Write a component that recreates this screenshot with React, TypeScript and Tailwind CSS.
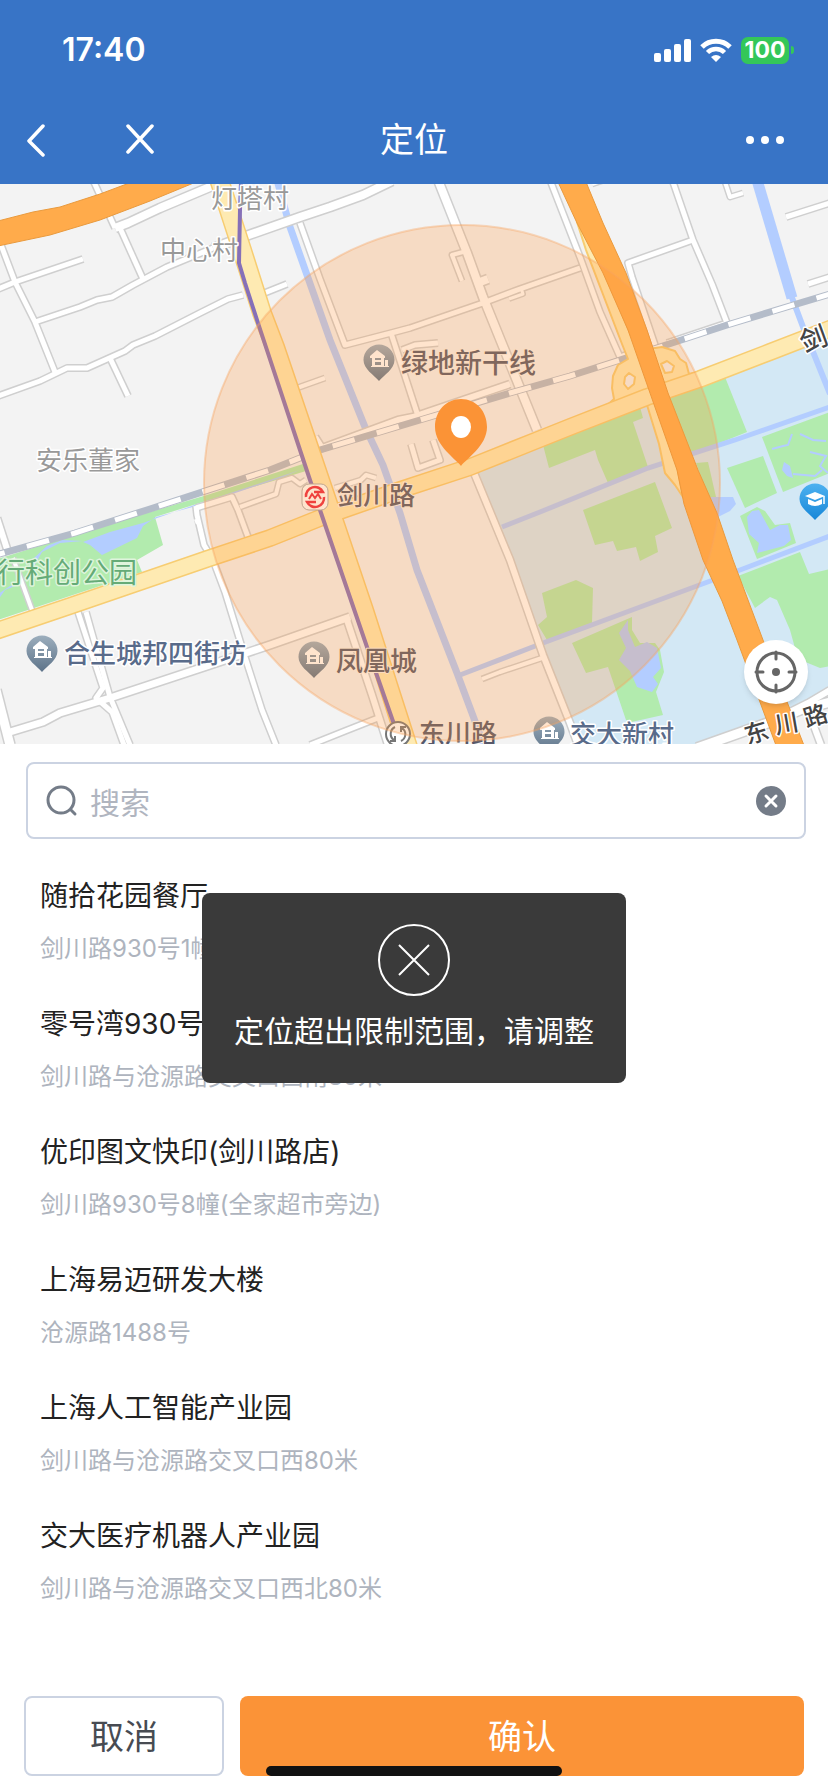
import React, { useState } from "react";

const FONT = "font-['Inter','Noto_Sans_CJK_SC',sans-serif]";

const places = [
  { name: "随拾花园餐厅", address: "剑川路930号1幢" },
  { name: "零号湾930号", address: "剑川路与沧源路交叉口西南80米" },
  { name: "优印图文快印(剑川路店)", address: "剑川路930号8幢(全家超市旁边)" },
  { name: "上海易迈研发大楼", address: "沧源路1488号" },
  { name: "上海人工智能产业园", address: "剑川路与沧源路交叉口西80米" },
  { name: "交大医疗机器人产业园", address: "剑川路与沧源路交叉口西北80米" },
];

// Side streets, w = width of the white fill
const streets = [
  { d: "M-2 237 L15 282 L35 322 L55 372", w: 5 },
  { d: "M-2 289 L15 282 L83 259", w: 5 },
  { d: "M35 322 L80 307 L97 300 L112 297 L133 285 L167 267 L213 248", w: 5 },
  { d: "M213 248 L243 237 L300 217 L330 207 L363 195 L392 181", w: 8 },
  { d: "M-2 396 L40 381 L67 368 L87 368 L125 351 L133 345 L155 336 L200 313 L228 299 L243 295", w: 5 },
  { d: "M262 294 L287 284", w: 5 },
  { d: "M110 358 L128 396", w: 5 },
  { d: "M115 228 L128 223 L160 208 L217 184", w: 8 },
  { d: "M93 180 L115 228", w: 5 },
  { d: "M120 228 L143 279", w: 5 },
  { d: "M300 223 L320 279 L345 345 L395 332 L410 328 L483 303 L520 289 L580 268", w: 5 },
  { d: "M438 180 L467 253 L483 297 L537 430", w: 8 },
  { d: "M391 333 L417 413", w: 5 },
  { d: "M315 437 L322 448 L398 420 L413 417 L510 384", w: 6 },
  { d: "M297 388 L325 378", w: 4 },
  { d: "M463 252 L452 255 L462 281", w: 4 },
  { d: "M480 282 L488 279", w: 8 },
  { d: "M509 299 L523 294 L521 288", w: 3 },
  { d: "M402 350 L415 345 L438 343", w: 5 },
  { d: "M411 444 L418 468 L440 460 L433 440", w: 5 },
  { d: "M550 180 L580 257 L600 312 L620 357 L628 354", w: 5 },
  { d: "M673 182 L693 240 L712 284 L727 323 L667 343", w: 5 },
  { d: "M693 240 L628 263 L632 277 L656 348", w: 5 },
  { d: "M725 182 L730 197 L743 193", w: 4 },
  { d: "M786 217 L830 203", w: 5 },
  { d: "M808 284 L830 277", w: 5 },
  { d: "M592 184 L604 180", w: 4 },
  { d: "M78 612 L103 688 L96 698 L112 712 L124 745", w: 5 },
  { d: "M86 612 L110 697 L130 745", w: 5 },
  { d: "M10 732 L43 722 L60 713 L80 707 L110 698 L207 666 L270 645 L350 617", w: 7 },
  { d: "M-4 690 L10 745", w: 9 },
  { d: "M195 522 L200 520 M196 506 L197 515 L204 545 L213 560 L225 592 L245 657 L262 710 L276 745", w: 5 },
  { d: "M196 508 L232 497 L238 510 L248 537", w: 5 },
  { d: "M240 507 L276 494 L279 482 L292 478 L300 484 L306 480", w: 4 },
  { d: "M-3 518 L8 552", w: 6 },
  { d: "M13 558 L32 610", w: 4 },
  { d: "M347 620 L372 695 L388 745", w: 6 },
  { d: "M378 718 L345 731 L310 745", w: 5 },
  { d: "M335 488 L361 480 L366 475 L376 478", w: 4 },
  { d: "M472 468 L510 560 L543 655 L570 723 L578 745", w: 6 },
  { d: "M482 679 L500 672 L542 658", w: 4 },
  { d: "M697 748 L773 721 L800 710 L830 702", w: 9 },
  { d: "M790 712 L808 703 L830 690", w: 6 },
  { d: "M808 710 L821 745", w: 6 },
];

const MAIN_ROAD = "M-4 631 L70 606 L207 559 L270 538 L320 518 L400 490 L470 467 L540 439 L570 427 L647 397 L700 379 L770 352 L832 328";
const JIANCHUAN_NS = "M216 170 L242 250 L262 313 L275 347 L315 465 L336 527 L364 610 L409 750";
const RAILWAY = "M-4 555 L75 533 L150 509 L270 470 L320 450 L430 417 L510 393 L570 376 L620 360 L727 325 L830 294";
const RAMPS =
  "M577 222 L590 236 L612 290 L632 338 L643 352 L648 349 L662 347 L675 351 L680 359 L686 363 L689 374 L700 372 L700 384 L660 398 L672 440 L683 497 L675 485 L665 473 L659 444 L647 405 L600 412 L614 399 L612 388 L613 376 L618 365 L628 359 L622 344 L586 250 Z";

const PoiPin = ({ x, y, fill = "url(#poi)", school = false }: { x: number; y: number; fill?: string; school?: boolean }) => (
  <g transform={`translate(${x} ${y})`}>
    <path d="M0 21 C-5 15 -15.5 9 -15.5 0 A15.5 15.5 0 1 1 15.5 0 C15.5 9 5 15 0 21 Z" fill={fill} />
    {school ? (
      <>
        <path d="M-10 -3 L0 -7 L10 -3 L0 1 Z" fill="#fff" />
        <path d="M-7 0 L0 3 L7 0 V5 Q0 9 -7 5 Z" fill="#fff" />
        <path d="M9 -3 V5" stroke="#fff" strokeWidth="1.5" />
      </>
    ) : (
      <path d="M-9 -4 L-2 -10 L6 -4 V-2 H5 V6 H6 V0 H9 V6 H10 V7 H-8 V6 H-7 V-2 H-9 Z M-4 -2 V0 H2 V-2 Z M-4 2 V5 H2 V2 Z" fill="#fff" fillRule="evenodd" />
    )}
  </g>
);

const MapView = () => (
  <svg
    viewBox="0 184 828 560"
    preserveAspectRatio="xMidYMid slice"
    className="block h-[560px] w-full bg-[#f3f3f3] font-['Noto_Sans_CJK_SC',sans-serif]"
    role="img"
    aria-label="地图"
  >
    <defs>
      <linearGradient id="poi" x1="0" y1="0" x2="0" y2="1">
        <stop offset="0" stopColor="#9caebd" />
        <stop offset="1" stopColor="#5d7389" />
      </linearGradient>
      <linearGradient id="edu" x1="0" y1="0" x2="0" y2="1">
        <stop offset="0" stopColor="#4db1f0" />
        <stop offset="1" stopColor="#1787d8" />
      </linearGradient>
    </defs>

    {/* Campus ground */}
    <path d="M472 470 L830 334 V690 L793 708 L700 745 H578 Z" fill="#d3e8f5" />

    {/* Parks */}
    <g fill="#b2ebae">
      <path d="M-2 559 L113 523 L207 495 L306 463 L306 471 L203 502 L155 517 L163 545 L137 560 L142 572 L-2 620 Z" />
      <path d="M543 445 L640 407 L643 418 L633 422 L648 467 L608 483 L598 460 L595 450 L549 468 Z" />
      <path d="M664 399 L725 377 L747 432 L690 455 Z" />
      <path d="M762 437 L830 412 V473 L783 492 Z" />
      <path d="M727 468 L763 456 L777 493 L745 508 Z" />
      <path d="M740 516 L757 507 L765 511 L775 525 L790 523 L796 543 L757 559 Z" />
      <path d="M738 576 L800 552 L809 574 L830 569 V666 L820 668 L798 659 L790 630 L777 600 L770 597 L755 608 Z" />
      <path d="M583 510 L655 482 L672 528 L655 536 L658 552 L640 561 L636 547 L617 551 L613 541 L595 545 Z" />
      <path d="M542 593 L576 580 L593 588 L592 623 L547 640 L538 625 L547 617 Z" />
      <path d="M572 643 L632 617 L632 630 L640 643 L655 643 L660 650 L664 672 L656 692 L663 715 L627 723 L608 667 L586 673 Z" />
      <path d="M696 463 L708 462 L716 497 L708 497 Z" />
    </g>

    {/* Water */}
    <g fill="#b3cdff">
      <path d="M83 542 L110 532 L143 523 L200 503 L300 470 L283 477 L200 505 L156 517 L143 526 L137 538 L102 555 L90 545 Z" />
      <path d="M83 541 L60 543 L42 552 L32 570 L20 584 L5 590 L-2 600 V594 L10 586 L28 576 L34 558 L47 546 L62 540 Z" />
      <path d="M628 620 L619 633 L626 648 L619 660 L630 671 L637 687 L652 692 L658 684 L653 677 L661 668 L657 648 L647 642 L635 647 L628 630 Z" />
      <path d="M710 497 L733 497 L736 504 L730 511 L718 517 Z" />
      <path d="M747 517 L752 511 L759 510 L770 530 L780 525 L788 525 L791 540 L784 546 L757 553 L759 543 L749 534 Z" />
      <path d="M784 462 L790 466 L793 478 L787 476 L782 470 Z" />
    </g>
    <g fill="none" stroke="#b3cdff">
      <path d="M277 180 L290 227 L330 340 L365 427 L383 465 L400 513 L417 570 L457 673 L485 748" strokeWidth="7" />
      <path d="M757 180 L792 298" strokeWidth="11" />
      <path d="M791 295 L803 327 L830 394" strokeWidth="6" />
      <path d="M830 407 L735 440 L648 468 L540 512 L502 527" strokeWidth="5" />
      <path d="M830 536 L740 570 L543 643 L460 675" strokeWidth="5" />
      <path d="M772 449 L783 446 L788 445 L792 434 M800 434 L813 440 L826 441 M810 452 L826 456 L820 466 L828 473 M793 474 L815 476 L822 470" strokeWidth="2" />
    </g>

    {/* Side streets: casing first so that junctions stay open */}
    <g fill="none" strokeLinejoin="round">
      {streets.map((s) => (
        <path key={s.d} d={s.d} stroke="#cfcfcf" strokeWidth={s.w + 3} />
      ))}
      {streets.map((s) => (
        <path key={s.d} d={s.d} stroke="#fff" strokeWidth={s.w} />
      ))}
    </g>

    {/* Railway */}
    <g fill="none">
      <path d={RAILWAY} stroke="#b4bcc9" strokeWidth="7" />
      <path d={RAILWAY} stroke="#fff" strokeWidth="5" strokeDasharray="23 23" strokeDashoffset="14" />
    </g>

    {/* Arterial roads */}
    <g fill="none" strokeLinejoin="round">
      <path d={RAMPS} fill="#feeab2" stroke="#f7cd72" strokeWidth="2" />
      <path d={MAIN_ROAD} stroke="#f7cd72" strokeWidth="18" />
      <path d={JIANCHUAN_NS} stroke="#f7cd72" strokeWidth="20" />
      <path d={MAIN_ROAD} stroke="#feeab2" strokeWidth="15" />
      <path d={JIANCHUAN_NS} stroke="#feeab2" strokeWidth="17" />
      <path d="M629 373 L635 377 L634 384 L628 389 L624 384 L625 377 Z M661 364 L667 361 L674 366 L672 372 L665 373 Z" fill="#f3f3f3" stroke="#f7cd72" strokeWidth="2" />
    </g>

    {/* Expressways */}
    <g fill="#ffab4b" stroke="#e99a3d" strokeWidth="1">
      <path d="M-2 221 L33 212 L60 207 L100 194 L132 182 H196 L150 201 L100 220 L50 235 L-2 246 Z" />
      <path d="M558 182 L577 223 L603 273 L628 330 L650 393 L677 470 L684 504 L703 560 L722 601 L737 640 L777 748 H805 L763 640 L733 560 L717 513 L698 470 L668 393 L647 330 L626 273 L603 223 L586 182 Z" />
    </g>

    {/* Metro line */}
    <path d="M241 182 L240 210 L239 263 L245 283 L258 323 L300 450 L320 510 L367 647 L395 727" fill="none" stroke="#8670b8" strokeWidth="4" />

    {/* Labels */}
    <g fontSize="26" stroke="#fff" strokeWidth="3" strokeLinejoin="round" className="[paint-order:stroke]">
      <g fill="#999">
        <text x="211" y="208">灯塔村</text>
        <text x="160" y="260">中心村</text>
        <text x="36" y="470">安乐董家</text>
      </g>
      <text x="-3" y="583" fontSize="28" fill="#65ab77" stroke="#dff5dd">行科创公园</text>
      <g fill="#596b8a" fontWeight="500">
        <text x="64" y="663">合生城邦四街坊</text>
        <text x="570" y="744">交大新村</text>
      </g>
      <g fill="#56586a" stroke="#fbf3ec" strokeWidth="2" fontWeight="500">
        <text x="401" y="373" fontSize="27">绿地新干线</text>
        <text x="336" y="671" fontSize="27">凤凰城</text>
        <text x="337" y="505">剑川路</text>
        <text x="419" y="743">东川路</text>
      </g>
      <g fill="#444" fontSize="24" fontWeight="500" textAnchor="middle">
        <text transform="translate(759 741) rotate(-17)">东</text>
        <text transform="translate(788 732) rotate(-10)">川</text>
        <text transform="translate(818 724) rotate(-17)">路</text>
        <text transform="translate(817 348) rotate(-20)" fontSize="27">剑</text>
      </g>
    </g>

    {/* Points of interest */}
    <PoiPin x={379} y={360} />
    <PoiPin x={42} y={651} />
    <PoiPin x={314} y={657} />
    <PoiPin x={549} y={732} />
    <PoiPin x={815} y={499} fill="url(#edu)" school />
    <rect x="302" y="484" width="26" height="26" rx="7" fill="#fff" stroke="#aaa" />
    <g fill="none" stroke="#ea2740" strokeWidth="2.5">
      <path d="M306 497 A9 9 0 0 1 323 492 H314 M324 497 A9 9 0 0 1 307 502 H316" />
      <path d="M309 499 L312 494 L315 498 L318 494 L321 499" strokeWidth="2" />
    </g>
    <circle cx="398" cy="734" r="12" fill="#fff" stroke="#777" strokeWidth="2" />
    <path d="M395 727 A7.500 7.500 0 0 0 394 740 M401 741 A7.500 7.500 0 0 0 402 728 M390 741 H395 V736 M406 727 H401 V732" fill="none" stroke="#777" strokeWidth="2" />

    {/* Allowed range */}
    <circle cx="462" cy="483" r="258" fill="#ff9436" fillOpacity="0.25" stroke="#f8a562" strokeOpacity="0.4" strokeWidth="2" />

    <path d="M461 466 C456 459 435 446 435 427 C435 411 446 399 461 399 C476 399 487 411 487 427 C487 446 466 459 461 466 Z" fill="#fb9336" />
    <ellipse cx="461" cy="427" rx="10" ry="11" fill="#fff" />
  </svg>
);

const StatusBar = () => (
  <div className="flex h-24 items-center justify-between pt-1 pr-[34px] pl-[62px]">
    <time className="text-[32px] font-semibold">17:40</time>
    <div className="flex items-center gap-[9px]">
      <svg className="h-[23px] w-[37px]" viewBox="0 0 37 23" fill="#fff">
        <rect x="0" y="14" width="7" height="9" rx="2" />
        <rect x="10" y="10" width="7" height="13" rx="2" />
        <rect x="20" y="5" width="7" height="18" rx="2" />
        <rect x="30" y="0" width="7" height="23" rx="2" />
      </svg>
      <svg className="h-6 w-8" viewBox="0 0 32 24" fill="none" stroke="#fff" strokeWidth="5">
        <path d="M2 9 A20 20 0 0 1 30 9" />
        <path d="M7.500 14.500 A12 12 0 0 1 24.500 14.500" strokeWidth="4.500" />
        <path d="M16 24 L11 19 Q16 15 21 19 Z" fill="#fff" stroke="none" />
      </svg>
      <div className="flex items-center gap-[2px]">
        <span className="flex h-[27px] w-12 items-center justify-center rounded-[7px] bg-[#34c759] text-[23px] font-bold">
          100
        </span>
        <span className="h-2 w-[3px] rounded-r-full bg-[#34c759]" />
      </div>
    </div>
  </div>
);

const App: React.FC = () => {
  const [keyword, setKeyword] = useState("");

  return (
    <div className={`flex min-h-screen flex-col bg-white text-[#222] ${FONT}`}>
      {/* Header */}
      <header className="bg-[#3874c6] text-white">
        <StatusBar />
        <nav className="grid h-[88px] grid-cols-[1fr_auto_1fr] items-center">
          <div className="flex items-center gap-[78px] pl-6">
            <button type="button" aria-label="返回">
              <svg className="h-[34px] w-6" viewBox="0 0 24 34" fill="none" stroke="#fff" strokeWidth="3.500" strokeLinecap="round" strokeLinejoin="round">
                <path d="M19 3 L5 18 L19 32" />
              </svg>
            </button>
            <button type="button" aria-label="关闭">
              <svg className="h-8 w-7" viewBox="0 0 28 32" fill="none" stroke="#fff" strokeWidth="3.500" strokeLinecap="round">
                <path d="M2 2 L26 28 M26 2 L2 28" />
              </svg>
            </button>
          </div>
          <h1 className="text-[34px] leading-10">定位</h1>
          <button type="button" aria-label="更多" className="mr-11 flex gap-[7px] justify-self-end">
            <span className="size-2 rounded-full bg-white" />
            <span className="size-2 rounded-full bg-white" />
            <span className="size-2 rounded-full bg-white" />
          </button>
        </nav>
      </header>

      {/* Map */}
      <section className="relative">
        <MapView />
        <button
          type="button"
          aria-label="定位到当前位置"
          className="absolute right-5 bottom-10 flex size-16 items-center justify-center rounded-full bg-white shadow-md"
        >
          <svg className="size-11" viewBox="0 0 44 44" fill="none" stroke="#666" strokeWidth="3" strokeLinecap="round">
            <circle cx="22" cy="22" r="19" />
            <path d="M22 2 V9 M22 35 V42 M2 22 H9 M35 22 H42" />
            <circle cx="22" cy="22" r="4" fill="#666" stroke="none" />
          </svg>
        </button>
      </section>

      {/* Search */}
      <div className="mt-[18px] mr-[22px] ml-[26px] flex h-[77px] items-center gap-3 rounded-lg border-2 border-[#cbd3e2] px-[18px]">
        <svg className="size-8 shrink-0" viewBox="0 0 32 32" fill="none" stroke="#747c88" strokeWidth="3" strokeLinecap="round">
          <circle cx="15" cy="15" r="13" />
          <path d="M25 25 L29 29" />
        </svg>
        <input
          type="text"
          aria-label="搜索"
          placeholder="搜索"
          value={keyword}
          onChange={(e) => setKeyword(e.target.value)}
          className="h-12 min-w-0 flex-1 pt-1 text-[30px] outline-none placeholder:text-[#b0b5bf]"
        />
        <button type="button" aria-label="清除" onClick={() => setKeyword("")} className="shrink-0">
          <svg className="size-[30px]" viewBox="0 0 30 30" stroke="#fff" strokeWidth="3" strokeLinecap="round">
            <circle cx="15" cy="15" r="15" fill="#747c88" stroke="none" />
            <path d="M10 10 L20 20 M20 10 L10 20" />
          </svg>
        </button>
      </div>

      {/* Results */}
      <main className="relative flex-1 px-10 pt-9">
        <ul>
          {places.map((place) => (
            <li key={place.name} className="h-32">
              <p className="text-[28px] leading-[42px]">{place.name}</p>
              <p className="mt-[14px] text-2xl leading-9 text-[#aeb4be]">{place.address}</p>
            </li>
          ))}
        </ul>

        {/* Toast */}
        <div
          role="alert"
          className="absolute top-[54px] left-1/2 flex w-[424px] -translate-x-1/2 flex-col items-center rounded-lg bg-[#3a3a3a] py-[30px] text-white"
        >
          <svg className="size-[74px]" viewBox="0 0 74 74" fill="none" stroke="#fff" strokeWidth="2">
            <circle cx="37" cy="37" r="35" />
            <path d="M22 22 L52 52 M52 22 L22 52" />
          </svg>
          <p className="mt-3 text-[30px] leading-11 whitespace-nowrap">定位超出限制范围，请调整</p>
        </div>
      </main>

      {/* Footer */}
      <footer className="relative flex gap-4 px-6 pb-4">
        <button type="button" className="h-20 w-[200px] rounded-lg border-2 border-[#cbd3e2] text-[34px] text-[#474b52]">
          取消
        </button>
        <button type="button" className="h-20 flex-1 rounded-lg bg-[#fb9337] text-[34px] text-white">
          确认
        </button>
        <div className="absolute bottom-4 left-1/2 h-[10px] w-[296px] -translate-x-1/2 rounded-full bg-[#111]" />
      </footer>
    </div>
  );
};

export default App;
